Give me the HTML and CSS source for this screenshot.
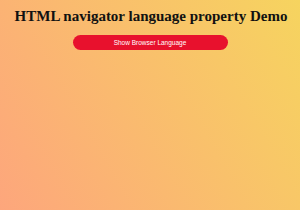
FILE: index.html
```html
<!DOCTYPE html>
<html>
<head>
<meta charset="utf-8">
<link rel="stylesheet" href="styles.css">
</head>
<body>
<div class="page">
  <h1 class="title">HTML navigator language property Demo</h1>
  <button class="btn">Show Browser Language</button>
</div>
</body>
</html>
```
FILE: styles.css
```css
html, body {
  margin: 0;
  padding: 0;
  height: 100%;
}
body {
  background: linear-gradient(60deg, #fda67c 0%, #f6d45f 100%);
}
.page {
  display: flex;
  flex-direction: column;
  align-items: center;
  padding-top: 8px;
}
.title {
  margin: 0 0 0 2px;
  font-family: "Liberation Serif", "Times New Roman", serif;
  font-weight: bold;
  font-size: 15px;
  line-height: 17px;
  color: #111;
}
.btn {
  margin-top: 10px;
  width: 155px;
  height: 15px;
  border: none;
  border-radius: 8px;
  background: #e8112d;
  color: #fff;
  font-family: "Liberation Sans", Arial, sans-serif;
  font-size: 6.5px;
  padding: 0;
}
```
